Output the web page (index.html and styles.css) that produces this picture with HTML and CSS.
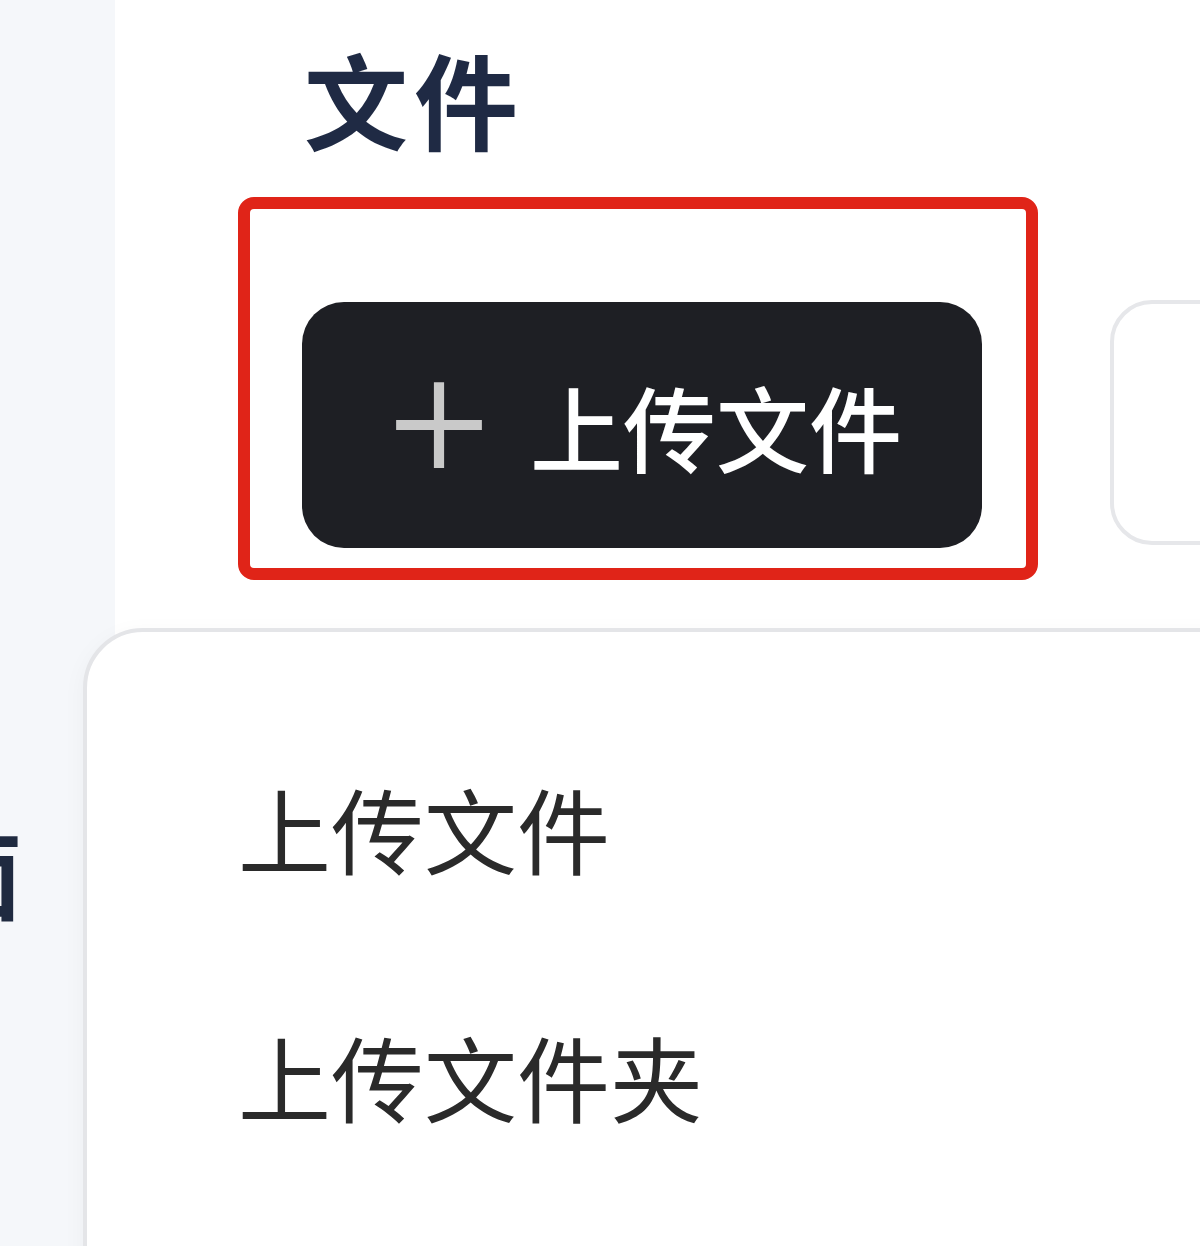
FILE: index.html
```html
<!DOCTYPE html>
<html>
<head>
<title>文件</title>
<link rel="stylesheet" href="styles.css">
</head>
<body>
<div class='layout'>
	<aside class='sidebar'>
		<div class='nav-item'>面</div>
	</aside>
	<main class='content'>
		<h1 class='page-title'>文件</h1>
		<div class='toolbar'>
			<div class='highlight'>
				<button class='btn btn-upload' type='button'>
					<svg class='btn-icon' viewBox='0 0 96 96' width='96' height='96'>
						<path d='M48 6 V90 M6 48 H90' stroke='#c9c9c9' stroke-width='10' fill='none' />
					</svg>
					<span>上传文件</span>
				</button>
			</div>
			<button class='btn btn-secondary' type='button'></button>
		</div>
	</main>
</div>
<ul class='menu'>
	<li class='menu-item'>上传文件</li>
	<li class='menu-item'>上传文件夹</li>
</ul>
</body>
</html>
```
FILE: styles.css
```css
body {
	margin: 0;
	font-family: "Noto Sans CJK SC", "Noto Sans", sans-serif;
	background-color: #ffffff;
	overflow: hidden;
}

.layout {
	display: flex;
	height: 1246px;
}

.sidebar {
	width: 115px;
	flex-shrink: 0;
	background-color: #f5f7fa;
	display: flex;
	flex-direction: column;
	align-items: flex-end;
	overflow: hidden;
	padding-top: 823px;
	box-sizing: border-box;
}

.nav-item {
	font-size: 96px;
	line-height: 1;
	font-weight: 700;
	color: #1f2a40;
	margin-right: 93px;
}

.content {
	flex: 1;
	display: flex;
	flex-direction: column;
}

.page-title {
	margin: 46px 0 0 189px;
	font-size: 104px;
	line-height: 1;
	font-weight: 700;
	letter-spacing: 6px;
	color: #1f2a44;
}

.toolbar {
	display: flex;
	align-items: flex-start;
	gap: 72px;
	margin: 47px 0 0 123px;
}

.highlight {
	border: 12px solid #e02418;
	border-radius: 16px;
	padding: 93px 44px 20px 52px;
	flex-shrink: 0;
}

.btn {
	font-family: inherit;
	border: none;
	cursor: pointer;
}

.btn-upload {
	width: 680px;
	height: 246px;
	border-radius: 42px;
	background-color: #1e1f24;
	color: #ffffff;
	display: flex;
	align-items: center;
	gap: 42px;
	padding: 0 0 0 88px;
	font-size: 93px;
	font-weight: 500;
	line-height: 1;
}

.btn-icon {
	width: 98px;
	height: 98px;
}

.btn-secondary {
	width: 300px;
	height: 245px;
	margin-top: 103px;
	flex-shrink: 0;
	background-color: #ffffff;
	border: 4px solid #e6e7ea;
	border-radius: 42px;
}

.menu {
	position: absolute;
	top: 628px;
	left: 83px;
	width: 1200px;
	height: 700px;
	margin: 0;
	padding: 71px 0 0 0;
	list-style: none;
	box-sizing: border-box;
	background-color: #ffffff;
	border: 4px solid #e4e5e8;
	border-radius: 60px;
	box-shadow: 0 6px 24px rgba(0, 0, 0, 0.04);
}

.menu-item {
	height: 248px;
	display: flex;
	align-items: center;
	padding-left: 151px;
	font-size: 93px;
	line-height: 1;
	color: #2a2a2a;
}
```
